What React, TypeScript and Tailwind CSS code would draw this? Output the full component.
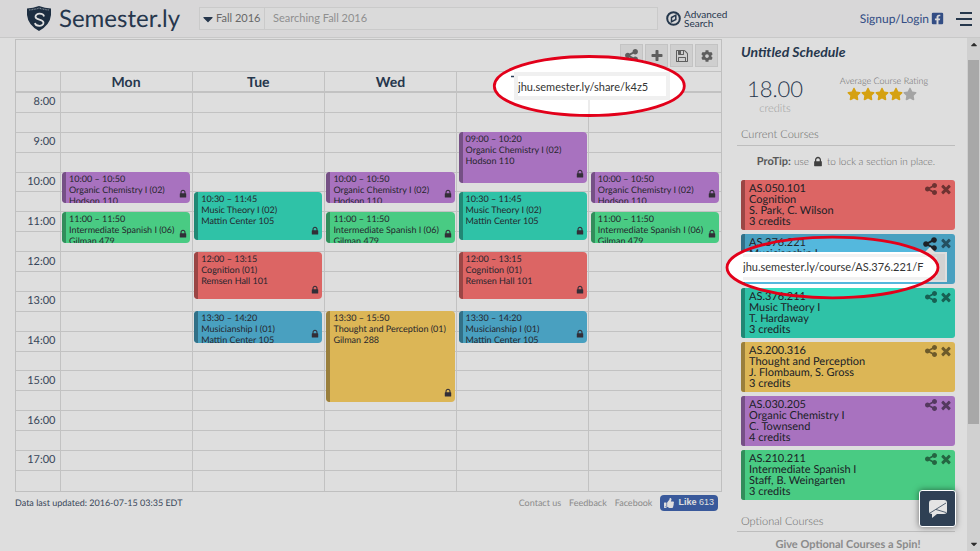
import type { ReactNode } from "react"
import { FaCaretDown, FaCog, FaFacebookSquare, FaStar, FaThumbsUp } from "react-icons/fa"

type Color = "purple" | "green" | "teal" | "red" | "blue" | "yellow"

type Slot = {
  day: number
  start: string
  end: string
  name: string
  room: string
  color: Color
}

type Course = {
  code: string
  name: string
  staff: string
  credits: number
  color: Color
}

const fills: Record<Color, string> = {
  purple: "bg-[#c284dc]",
  green: "bg-[#54ea97]",
  teal: "bg-[#36dfc0]",
  red: "bg-[#fd7473]",
  blue: "bg-[#54b8dd]",
  yellow: "bg-[#fdd163]",
}

const bars: Record<Color, string> = {
  purple: "bg-[#875c99]",
  green: "bg-[#3aa369]",
  teal: "bg-[#269c86]",
  red: "bg-[#b15150]",
  blue: "bg-[#3a819b]",
  yellow: "bg-[#b19245]",
}

const days = ["Mon", "Tue", "Wed", "Thu", "Fri"]
const hours = [8, 9, 10, 11, 12, 13, 14, 15, 16, 17]

const slots: Slot[] = [
  { day: 0, start: "10:00", end: "10:50", name: "Organic Chemistry I (02)", room: "Hodson 110", color: "purple" },
  { day: 0, start: "11:00", end: "11:50", name: "Intermediate Spanish I (06)", room: "Gilman 479", color: "green" },
  { day: 1, start: "10:30", end: "11:45", name: "Music Theory I (02)", room: "Mattin Center 105", color: "teal" },
  { day: 1, start: "12:00", end: "13:15", name: "Cognition (01)", room: "Remsen Hall 101", color: "red" },
  { day: 1, start: "13:30", end: "14:20", name: "Musicianship I (01)", room: "Mattin Center 105", color: "blue" },
  { day: 2, start: "10:00", end: "10:50", name: "Organic Chemistry I (02)", room: "Hodson 110", color: "purple" },
  { day: 2, start: "11:00", end: "11:50", name: "Intermediate Spanish I (06)", room: "Gilman 479", color: "green" },
  { day: 2, start: "13:30", end: "15:50", name: "Thought and Perception (01)", room: "Gilman 288", color: "yellow" },
  { day: 3, start: "09:00", end: "10:20", name: "Organic Chemistry I (02)", room: "Hodson 110", color: "purple" },
  { day: 3, start: "10:30", end: "11:45", name: "Music Theory I (02)", room: "Mattin Center 105", color: "teal" },
  { day: 3, start: "12:00", end: "13:15", name: "Cognition (01)", room: "Remsen Hall 101", color: "red" },
  { day: 3, start: "13:30", end: "14:20", name: "Musicianship I (01)", room: "Mattin Center 105", color: "blue" },
  { day: 4, start: "10:00", end: "10:50", name: "Organic Chemistry I (02)", room: "Hodson 110", color: "purple" },
  { day: 4, start: "11:00", end: "11:50", name: "Intermediate Spanish I (06)", room: "Gilman 479", color: "green" },
]

const courses: Course[] = [
  { code: "AS.050.101", name: "Cognition", staff: "S. Park, C. Wilson", credits: 3, color: "red" },
  { code: "AS.376.221", name: "Musicianship I", staff: "S. Stone", credits: 3, color: "blue" },
  { code: "AS.376.211", name: "Music Theory I", staff: "T. Hardaway", credits: 3, color: "teal" },
  { code: "AS.200.316", name: "Thought and Perception", staff: "J. Flombaum, S. Gross", credits: 3, color: "yellow" },
  { code: "AS.030.205", name: "Organic Chemistry I", staff: "C. Townsend", credits: 4, color: "purple" },
  { code: "AS.210.211", name: "Intermediate Spanish I", staff: "Staff, B. Weingarten", credits: 3, color: "green" },
]

// grid line of a time, the day grid has one row for every 5 minutes from 8:00
function line(time: string) {
  const [h, m] = time.split(":").map(Number)
  return ((h - 8) * 60 + m) / 5 + 1
}

function Glyph({ d, className }: { d: string; className?: string }) {
  return (
    <svg viewBox="0 0 1792 1792" fill="currentColor" aria-hidden="true" className={className}>
      <path d={d} />
    </svg>
  )
}

const icons = {
  share:
    "M1344 1024q133 0 226.500 93.500t93.500 226.500-93.500 226.500-226.500 93.500-226.500-93.500-93.500-226.500q0-12 2-34l-360-180q-92 86-218 86-133 0-226.500-93.500t-93.500-226.500 93.500-226.500 226.500-93.500q126 0 218 86l360-180q-2-22-2-34 0-133 93.500-226.500t226.500-93.500 226.500 93.500 93.500 226.500-93.500 226.500-226.500 93.500q-126 0-218-86l-360 180q2 22 2 34t-2 34l360 180q92-86 218-86z",
  plus: "M1600 736v192q0 40-28 68t-68 28h-416v416q0 40-28 68t-68 28h-192q-40 0-68-28t-28-68v-416h-416q-40 0-68-28t-28-68v-192q0-40 28-68t68-28h416v-416q0-40 28-68t68-28h192q40 0 68 28t28 68v416h416q40 0 68 28t28 68z",
  save: "M512 1536h768v-384h-768v384zm896 0h128v-896q0-14-10-38.500t-20-34.500l-281-281q-10-10-34-20t-39-10v416q0 40-28 68t-68 28h-576q-40 0-68-28t-28-68v-416h-128v1280h128v-416q0-40 28-68t68-28h832q40 0 68 28t28 68v416zm-384-928v-320q0-13-9.500-22.500t-22.500-9.500h-192q-13 0-22.500 9.500t-9.500 22.500v320q0 13 9.500 22.500t22.500 9.500h192q13 0 22.500-9.500t9.500-22.500zm640 32v928q0 40-28 68t-68 28h-1344q-40 0-68-28t-28-68v-1344q0-40 28-68t68-28h928q40 0 88 20t76 48l280 280q28 28 48 76t20 88z",
  times:
    "M1490 1322q0 40-28 68l-136 136q-28 28-68 28t-68-28l-294-294-294 294q-28 28-68 28t-68-28l-136-136q-28-28-28-68t28-68l294-294-294-294q-28-28-28-68t28-68l136-136q28-28 68-28t68 28l294 294 294-294q28-28 68-28t68 28l136 136q28 28 28 68t-28 68l-294 294 294 294q28 28 28 68z",
  lock: "M640 768h512v-192q0-106-75-181t-181-75-181 75-75 181v192zm832 96v576q0 40-28 68t-68 28h-960q-40 0-68-28t-28-68v-576q0-40 28-68t68-28h32v-192q0-184 132-316t316-132 316 132 132 316v192h32q40 0 68 28t28 68z",
}

function Logo() {
  return (
    <a href="#" className="flex items-center gap-2 text-[#2c4058]">
      <svg viewBox="0 0 24 25" className="h-[25px] w-6" aria-hidden="true">
        <path d="M0 2.500Q6 2 12 0Q18 2 24 2.500V9Q23 19 12 25Q1 19 0 9Z" fill="#22354b" />
        <path d="M2 4Q7 3.500 12 2.200Q17 3.500 22 4" fill="none" stroke="#8d99a6" strokeWidth="1.200" strokeDasharray="1 .6" />
        <path
          d="M17 10.500C16.500 7 8.500 6.500 8.500 10.700C8.500 14.500 16.500 12.600 16.500 16.800C16.500 21 8.500 20.500 8 17"
          fill="none"
          stroke="#fff"
          strokeWidth="1.800"
        />
      </svg>
      <span className="text-2xl">Semester.ly</span>
    </a>
  )
}

function Header() {
  return (
    <header className="flex h-[38px] shrink-0 items-center border-b border-[#e6e6e6] bg-[#f8f7f8] pl-[27px] text-[#2c4058]">
      <div className="w-[172px]">
        <Logo />
      </div>
      <form className="flex h-[23px] flex-1 border border-[#e8e8e8] bg-[#fbfbfb]">
        <label className="flex items-center border-r border-[#e8e8e8] pr-[2px]">
          <FaCaretDown className="size-4" />
          <select aria-label="Term" className="w-[46px] appearance-none text-[11px] text-[#777] outline-none">
            <option>Fall 2016</option>
          </select>
        </label>
        <input
          type="search"
          aria-label="Search courses"
          placeholder="Searching Fall 2016"
          className="min-w-0 flex-1 px-2 text-[11px] outline-none placeholder:text-[#a5a5a5]"
        />
      </form>
      <div className="flex w-[322px] items-center justify-between pr-2 pl-2">
        <button className="flex items-center gap-[3px] text-left text-[10px] leading-[9px]">
          <svg viewBox="0 0 15 15" className="size-[15px]" aria-hidden="true">
            <circle cx="7.500" cy="7.500" r="6.300" fill="none" stroke="currentColor" strokeWidth="2" />
            <path d="M5.500 6.500L9.800 4.200V8.500L5.500 10.800Z" fill="none" stroke="currentColor" strokeWidth="1.500" />
          </svg>
          <span>
            Advanced
            <br />
            Search
          </span>
        </button>
        <div className="flex items-center gap-3">
          <a href="#" className="flex items-center gap-[2px] text-xs text-[#3b5998]">
            Signup/Login
            <FaFacebookSquare className="size-[13px]" />
          </a>
          <button aria-label="Menu" className="flex flex-col items-end gap-1">
            <span className="h-[2px] w-3 bg-current" />
            <span className="h-[2px] w-4 bg-current" />
            <span className="h-[2px] w-3 bg-current" />
          </button>
        </div>
      </div>
    </header>
  )
}

function ToolButton({ label, children }: { label: string; children: ReactNode }) {
  return (
    <button
      aria-label={label}
      className="grid size-[23px] place-items-center border border-[#e0e0e0] bg-[#eeeeee] text-[#6d6d6d]"
    >
      {children}
    </button>
  )
}

function Event({ slot }: { slot: Slot }) {
  return (
    <article
      className={`relative mx-[2px] mb-[2px] flex min-h-0 overflow-hidden rounded-sm ${fills[slot.color]}`}
      style={{ gridColumn: slot.day + 2, gridRow: `${line(slot.start)} / ${line(slot.end)}` }}
    >
      <span className={`w-1 shrink-0 ${bars[slot.color]}`} />
      <p className="h-0 pt-px pl-[3px] text-[9px] leading-[11px] whitespace-nowrap text-[#2b2b33]">
        {slot.start} – {slot.end}
        <br />
        {slot.name}
        <br />
        {slot.room}
      </p>
      <Glyph d={icons.lock} className="absolute right-[2px] bottom-1 size-[10px] text-[#3a3540]" />
    </article>
  )
}

function ShareLink({ url }: { url: string }) {
  return (
    <input
      readOnly
      aria-label="Share link"
      defaultValue={url}
      className="block h-5 w-full bg-white text-[11px] text-[#333] outline-none"
    />
  )
}

function Calendar() {
  return (
    <div className="border border-[#dcdcdc]">
      <div className="flex h-[31px] items-center justify-end gap-[2px] pr-[3px]">
        <ToolButton label="Share schedule">
          <Glyph d={icons.share} className="size-[15px]" />
        </ToolButton>
        <ToolButton label="New schedule">
          <Glyph d={icons.plus} className="size-[14px]" />
        </ToolButton>
        <ToolButton label="Save schedule">
          <Glyph d={icons.save} className="size-[14px]" />
        </ToolButton>
        <ToolButton label="Preferences">
          <FaCog className="size-3" />
        </ToolButton>
      </div>
      <table className="w-full table-fixed border-collapse text-[#2c4058]">
        <thead>
          <tr className="h-5 border-t border-b-2 border-[#dfdfdf]">
            <th className="w-[44px]" />
            {days.map((day) => (
              <th key={day} className="border-l border-[#dfdfdf] p-0 text-sm leading-[17px] font-bold">
                {day}
              </th>
            ))}
          </tr>
        </thead>
      </table>
      <div className="relative">
        <table className="h-[398px] w-full table-fixed border-collapse text-[#3f5168]">
          <tbody>
            {hours.flatMap((hour) => [
              <tr key={hour} className="h-[5%] border-b border-[#dfdfdf]">
                <th className="w-[44px] p-0 pr-1 text-right text-[11px] leading-3 font-normal">{hour}:00</th>
                {days.map((day) => (
                  <td key={day} className="border-l border-[#dfdfdf] p-0" />
                ))}
              </tr>,
              <tr key={hour + "half"} className="h-[5%] border-b border-[#dfdfdf] last:border-b-0">
                <th className="p-0" />
                {days.map((day) => (
                  <td key={day} className="border-l border-[#dfdfdf] p-0" />
                ))}
              </tr>,
            ])}
          </tbody>
        </table>
        <div className="absolute inset-0 grid grid-cols-[44px_repeat(5,minmax(0,1fr))] grid-rows-[repeat(120,minmax(0,1fr))]">
          {slots.map((slot) => (
            <Event key={slot.day + slot.start} slot={slot} />
          ))}
        </div>
      </div>
    </div>
  )
}

function Footer() {
  return (
    <footer className="flex items-center gap-2 pt-[3px] pr-1 text-[9px] text-[#3f5168]">
      <p className="mr-auto">Data last updated: 2016-07-15 03:35 EDT</p>
      <a href="#" className="text-[#a0a0a0]">
        Contact us
      </a>
      <a href="#" className="text-[#a0a0a0]">
        Feedback
      </a>
      <a href="#" className="text-[#a0a0a0]">
        Facebook
      </a>
      <button className="flex h-4 items-center gap-1 rounded-sm bg-[#4267b2] px-1 font-['Liberation_Sans',sans-serif] text-[9px] text-white">
        <FaThumbsUp className="size-[10px]" />
        <span>
          <b>Like</b> 613
        </span>
      </button>
    </footer>
  )
}

function CourseCard({ course, shared }: { course: Course; shared?: boolean }) {
  return (
    <li className={`relative flex rounded-[3px] ${fills[course.color]}`}>
      <span className={`w-1 shrink-0 rounded-l-[3px] ${bars[course.color]}`} />
      <p className="flex-1 py-[3px] pl-1 text-[11px] leading-[11px] text-[#22262c]">
        {course.code}
        <br />
        {course.name}
        <br />
        {course.staff}
        <br />
        {course.credits} credits
      </p>
      <div className="flex items-start gap-px pt-[2px] pr-[2px] text-black/50">
        <button aria-label={`Share ${course.code}`} className={shared ? "text-[#22262c]" : ""}>
          <Glyph d={icons.share} className={shared ? "size-4" : "size-[14px]"} />
        </button>
        <button aria-label={`Remove ${course.code}`}>
          <Glyph d={icons.times} className="size-[14px]" />
        </button>
      </div>
      {shared && (
        <div className="absolute top-[18px] right-[8px] left-0 z-10 border-2 border-white bg-[#f2f2f2] py-[3px] pr-2">
          <span className="absolute -top-[7px] right-[9px] border-x-[6px] border-b-[6px] border-x-transparent border-b-white" />
          <ShareLink url="jhu.semester.ly/course/AS.376.221/F" />
        </div>
      )}
    </li>
  )
}

function Sidebar() {
  return (
    <aside className="w-[245px] shrink-0 overflow-hidden pr-3 pl-[15px] text-[#777]">
      <input
        aria-label="Schedule name"
        defaultValue="Untitled Schedule"
        className="mt-1 w-full pl-1 text-sm font-bold text-[#2c4058] italic outline-none"
      />
      <div className="mt-[11px] flex">
        <div className="w-[76px] text-center">
          <p className="text-[22px] leading-7 font-light text-[#2c4058]">18.00</p>
          <p className="text-[11px] leading-3 font-light text-[#b5b5b5]">credits</p>
        </div>
        <div className="flex-1 text-center">
          <p className="text-[9px] leading-3 font-light">Average Course Rating</p>
          <p className="flex justify-center pr-1 text-[#f5b914]" role="img" aria-label="4 of 5 stars">
            {[1, 2, 3, 4, 5].map((n) => (
              <FaStar key={n} className={n > 4 ? "size-[14px] text-[#bdbdbd]" : "size-[14px]"} />
            ))}
          </p>
        </div>
      </div>
      <h2 className="mt-3 border-b border-[#dadada] pb-px pl-1 text-[11px] font-light">Current Courses</h2>
      <p className="flex items-center justify-center gap-[3px] pt-2 pb-[10px] text-[10px] leading-4 font-light">
        <b className="text-[11px] font-bold text-[#666]">ProTip:</b> use
        <Glyph d={icons.lock} className="size-3 text-[#4a4a4a]" />
        to lock a section in place.
      </p>
      <ul className="flex flex-col gap-1 pl-1">
        {courses.map((course) => (
          <CourseCard key={course.code} course={course} shared={course.code === "AS.376.221"} />
        ))}
      </ul>
      <h2 className="mt-[14px] border-b border-[#dadada] pb-px pl-1 text-[11px] font-light">Optional Courses</h2>
      <p className="mt-[5px] pl-1 text-center text-[11px] font-bold whitespace-nowrap text-[#a0a0a0]">
        Give Optional Courses a Spin!
      </p>
    </aside>
  )
}

function Scrollbar() {
  return (
    <div className="flex w-[13px] shrink-0 flex-col items-center bg-[#efefef] text-[#333]">
      <FaCaretDown className="my-[2px] size-[10px] rotate-180" />
      <span className="mt-2 h-[364px] w-[11px] bg-[#c1c1c1]" />
      <FaCaretDown className="mt-auto mb-[2px] size-[10px]" />
    </div>
  )
}

// dims the page except for the two circled share links
function Spotlight() {
  return (
    <svg className="pointer-events-none absolute inset-0 z-20 size-full" aria-hidden="true">
      <mask id="holes">
        <rect width="100%" height="100%" fill="#fff" />
        <ellipse cx="589.300" cy="86" rx="95" ry="29.500" fill="#000" />
        <ellipse cx="832.500" cy="267.500" rx="105.500" ry="30.300" fill="#000" />
      </mask>
      <rect width="100%" height="100%" fill="#000" fillOpacity="0.130" mask="url(#holes)" />
      <g fill="none" stroke="#e2001a" strokeWidth="2.800">
        <ellipse cx="589.300" cy="86" rx="95" ry="29.500" />
        <ellipse cx="832.500" cy="267.500" rx="105.500" ry="30.300" />
      </g>
    </svg>
  )
}

export default function App() {
  return (
    <div className="relative flex h-screen flex-col overflow-hidden bg-white font-[Lato,sans-serif] [text-rendering:geometricPrecision]">
      <Header />
      <div className="flex min-h-0 flex-1">
        <main className="min-w-0 flex-1 pt-px pl-[15px]">
          <Calendar />
          <Footer />
        </main>
        <Sidebar />
        <Scrollbar />
      </div>
      <svg className="pointer-events-none absolute inset-0 size-full" aria-hidden="true">
        <ellipse cx="589.300" cy="86" rx="95" ry="29.500" fill="#fff" />
        <path d="M511 76.500h4" stroke="#2c4058" strokeWidth="1.500" />
        <path d="M589 100v15" stroke="#e6e6e6" strokeWidth="1.500" />
      </svg>
      <div className="absolute top-[72px] left-[514px] w-[156px] border-4 border-[#f0f0f0] bg-white">
        <ShareLink url="jhu.semester.ly/share/k4z5" />
      </div>
      <Spotlight />
      <button
        aria-label="Open chat"
        className="absolute right-6 bottom-6 z-30 grid size-[37px] place-items-center rounded-[3px] border border-white bg-[#2f4054] shadow-[0_0_6px_rgba(0,0,0,0.5)]"
      >
        <svg viewBox="0 0 20 20" className="size-5" aria-hidden="true">
          <path d="M4 1H16Q19 1 19 4V12Q19 15 16 15H9L4 19V15Q1 15 1 12V4Q1 1 4 1Z" fill="#e4e4e4" />
          <path d="M2 14L18 4M8 10.500L18 13.500" stroke="#2f4054" strokeWidth="0.800" />
        </svg>
      </button>
    </div>
  )
}
